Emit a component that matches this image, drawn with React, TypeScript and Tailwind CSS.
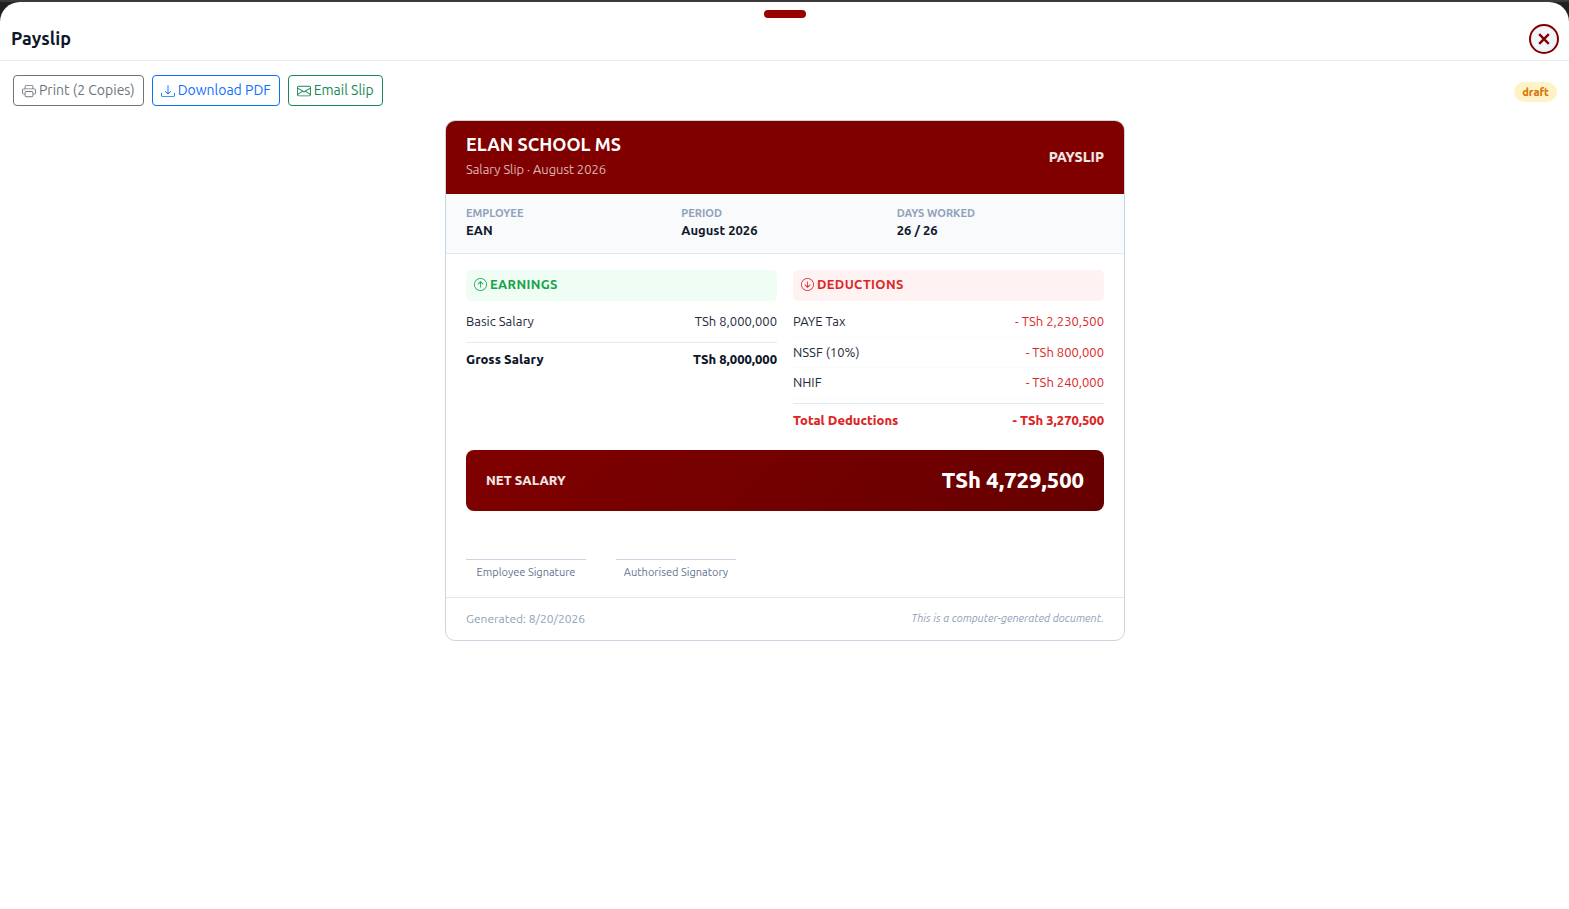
import { BsArrowDownCircle, BsArrowUpCircle, BsDownload, BsEnvelope, BsPrinter } from 'react-icons/bs';

const info = [
  { label: 'EMPLOYEE', value: 'EAN' },
  { label: 'PERIOD', value: 'August 2026' },
  { label: 'DAYS WORKED', value: '26 / 26' },
];

const earnings = [{ label: 'Basic Salary', amount: 'TSh 8,000,000' }];

const deductions = [
  { label: 'PAYE Tax', amount: '- TSh 2,230,500' },
  { label: 'NSSF (10%)', amount: '- TSh 800,000' },
  { label: 'NHIF', amount: '- TSh 240,000' },
];

interface LinesProps {
  rows: { label: string; amount: string }[];
  total: { label: string; amount: string };
  amountClass: string;
  totalClass: string;
}

function Lines({ rows, total, amountClass, totalClass }: LinesProps) {
  return (
    <table className="block text-[13px] leading-normal">
      <tbody className="block">
        {rows.map(row => (
          <tr key={row.label} className="flex justify-between border-b border-slate-50 py-[5px]">
            <th scope="row" className="font-normal text-[#1e293b]">{row.label}</th>
            <td className={amountClass}>{row.amount}</td>
          </tr>
        ))}
      </tbody>
      <tfoot className="mt-1 block">
        <tr className={`flex justify-between border-t border-slate-200 pt-[7px] font-extrabold ${totalClass}`}>
          <th scope="row" className="font-extrabold">{total.label}</th>
          <td>{total.amount}</td>
        </tr>
      </tfoot>
    </table>
  );
}

export default function App() {
  return (
    <div className="flex min-h-screen flex-col bg-[#212121] font-['Ubuntu','Open_Sans',sans-serif] text-slate-900">
      <div className="h-[2px] bg-[#3a3a3a]" />
      <main className="flex-1 rounded-t-[20px] bg-white">
        {/* Drag handle */}
        <div className="flex justify-center pt-2">
          <div className="h-2 w-[42px] rounded-full bg-[#990000]" />
        </div>

        <header className="flex items-center justify-between border-b border-[#e9ecef] py-[6px] pr-[10px] pl-[11px]">
          <h1 className="pb-[2px] text-[18px] leading-6 font-semibold">Payslip</h1>
          <button
            aria-label="Close"
            className="flex size-[30px] items-center justify-center rounded-full border-2 border-[#800000] bg-slate-100 text-[#800000]"
          >
            <svg viewBox="0 0 12 12" className="size-3" fill="none" stroke="currentColor" strokeWidth="2.4">
              <path d="M1.2 1.2 10.8 10.8M10.8 1.2 1.2 10.8" />
            </svg>
          </button>
        </header>

        <div className="pt-[14px] pr-3 pl-[13px]">
          <div className="flex items-center justify-between">
            <div className="flex gap-2 text-[14px] leading-[21px]">
              <button className="flex items-center gap-[3px] rounded border border-[#6c757d] px-2 py-1 text-[#6c757d]">
                <BsPrinter className="size-[14px]" />
                Print (2 Copies)
              </button>
              <button className="flex items-center gap-[3px] rounded border border-[#0d6efd] px-2 py-1 text-[#0d6efd]">
                <BsDownload className="size-[14px]" />
                Download PDF
              </button>
              <button className="flex items-center gap-[3px] rounded border border-[#198754] px-2 py-1 text-[#198754]">
                <BsEnvelope className="size-[14px]" />
                Email Slip
              </button>
            </div>
            <span className="mt-[2px] rounded-full bg-amber-100 px-2 text-[11px] leading-5 font-extrabold text-[#d97706]">draft</span>
          </div>

          <article className="mx-auto mt-[14px] max-w-[680px] overflow-hidden rounded-[10px] border border-slate-300">
            <div className="flex items-center justify-between bg-[#800000] px-5 pt-[13px] pb-[14px] text-white">
              <div>
                <h2 className="text-[18px] leading-5 font-bold">ELAN SCHOOL MS</h2>
                <p className="pt-1 text-[13px] leading-[22px] font-light text-white/80">Salary Slip · August 2026</p>
              </div>
              <div className="text-[14px] leading-5 font-extrabold text-white/90">PAYSLIP</div>
            </div>

            <dl className="grid grid-cols-3 gap-2 border-b border-slate-200 bg-slate-50 px-5 pt-[10px] pb-[15px]">
              {info.map(item => (
                <div key={item.label}>
                  <dt className="text-[11px] leading-[18px] font-bold text-slate-400">{item.label}</dt>
                  <dd className="text-[13px] leading-4 font-semibold">{item.value}</dd>
                </div>
              ))}
            </dl>

            <div className="px-5 pt-4 pb-4">
              <div className="grid grid-cols-2 gap-4">
                <section>
                  <h3 className="mb-[6px] flex items-center gap-[3px] rounded-[5px] bg-green-50 px-2 pt-1 pb-[6px] text-[13px] leading-[21px] font-bold tracking-wide text-[#16a34a]">
                    <BsArrowUpCircle className="size-[13px]" />
                    EARNINGS
                  </h3>
                  <Lines
                    rows={earnings}
                    total={{ label: 'Gross Salary', amount: 'TSh 8,000,000' }}
                    amountClass="text-[#1e293b]"
                    totalClass="text-slate-900"
                  />
                </section>
                <section>
                  <h3 className="mb-[6px] flex items-center gap-[3px] rounded-[5px] bg-[#fef2f2] px-2 pt-1 pb-[6px] text-[13px] leading-[21px] font-bold tracking-wide text-[#dc2626]">
                    <BsArrowDownCircle className="size-[13px]" />
                    DEDUCTIONS
                  </h3>
                  <Lines
                    rows={deductions}
                    total={{ label: 'Total Deductions', amount: '- TSh 3,270,500' }}
                    amountClass="text-[#dc2626]"
                    totalClass="text-[#dc2626]"
                  />
                </section>
              </div>

              <div className="mt-5 flex items-center justify-between rounded-lg bg-linear-135 from-[#800000] to-[#660000] px-5 pt-[13px] pb-[15px] text-white">
                <span className="text-[13px] leading-5 font-extrabold text-white/90">NET SALARY</span>
                <span className="text-[22px] leading-[33px] font-extrabold">TSh 4,729,500</span>
              </div>

              <div className="mt-12 flex gap-[30px] text-center text-[11px] leading-[17px] text-slate-500">
                <div className="w-[120px] border-t border-slate-300 pt-1">Employee Signature</div>
                <div className="w-[120px] border-t border-slate-300 pt-1">Authorised Signatory</div>
              </div>
            </div>

            <footer className="flex justify-between border-t border-slate-200 px-5 py-3 text-slate-400">
              <span className="text-[12px] leading-[18px]">Generated: 8/20/2026</span>
              <em className="text-[11px] leading-4">This is a computer-generated document.</em>
            </footer>
          </article>
        </div>
      </main>
    </div>
  );
}
